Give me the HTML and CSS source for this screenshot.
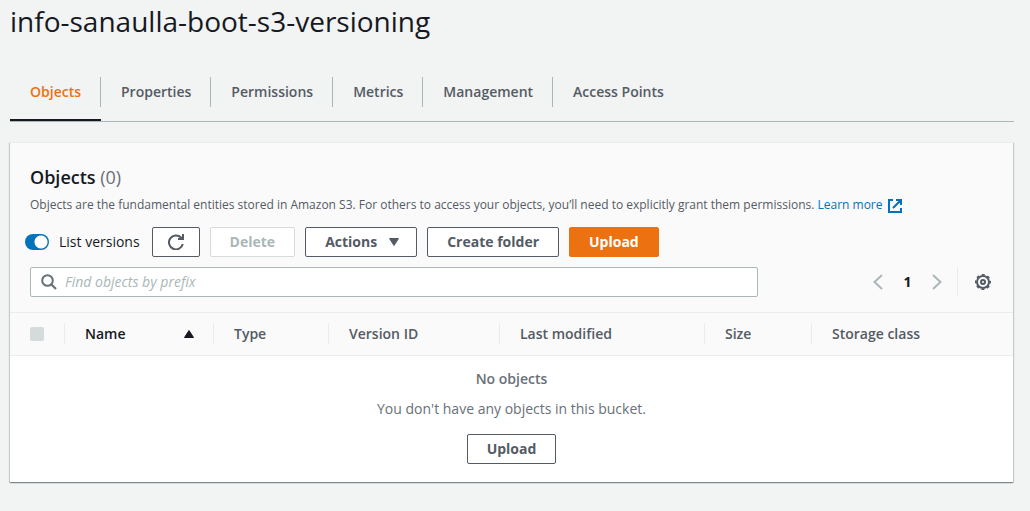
FILE: index.html
```html
<!DOCTYPE html>
<html lang="en">
<head>
<meta charset="utf-8">
<title>info-sanaulla-boot-s3-versioning</title>
<link rel="stylesheet" href="styles.css">
</head>
<body>
<main class="page">
  <h1 class="title">info-sanaulla-boot-s3-versioning</h1>

  <nav class="tabs">
    <a class="tab tab-active" href="#objects"><span>Objects</span></a>
    <a class="tab" href="#properties"><span>Properties</span></a>
    <a class="tab" href="#permissions"><span>Permissions</span></a>
    <a class="tab" href="#metrics"><span>Metrics</span></a>
    <a class="tab" href="#management"><span>Management</span></a>
    <a class="tab" href="#access-points"><span>Access Points</span></a>
  </nav>

  <section class="card">
    <header class="card-header">
      <h2 class="heading">Objects <span class="count">(0)</span></h2>
      <p class="description">Objects are the fundamental entities stored in Amazon S3. For others to access your objects, you’ll need to explicitly grant them permissions. <a class="link" href="#learn-more">Learn more
        <svg class="external" viewBox="0 0 14 14" width="14" height="14" aria-hidden="true"><path d="M5 1H1v12h12V9M8 1h5v5M13 1L5 9" fill="none" stroke="currentColor" stroke-width="2"/></svg></a></p>

      <div class="actions">
        <label class="toggle"><input class="switch" type="checkbox" role="switch" checked>List versions</label>
        <button class="button button-icon" type="button" aria-label="Refresh">
          <svg viewBox="0 0 16 16" width="16" height="16" aria-hidden="true"><path d="M14.800 10A7 7 0 1 1 13 3.500L14.500 5M10 5h5V0" fill="none" stroke="currentColor" stroke-width="2"/></svg>
        </button>
        <button class="button" type="button" disabled>Delete</button>
        <button class="button" type="button">Actions
          <svg class="caret" viewBox="0 0 10 8" width="10" height="8" aria-hidden="true"><path d="M.5.5h9L5 7.500z" fill="currentColor" stroke="currentColor" stroke-linejoin="round"/></svg>
        </button>
        <button class="button" type="button">Create folder</button>
        <button class="button button-primary" type="button">Upload</button>
      </div>

      <div class="filters">
        <div class="search">
          <svg viewBox="0 0 16 16" width="16" height="16" aria-hidden="true"><circle cx="6.500" cy="6.500" r="5.300" fill="none" stroke="currentColor" stroke-width="2"/><path d="M10.500 10.500L15 15" stroke="currentColor" stroke-width="2.200"/></svg>
          <input class="search-input" type="search" aria-label="Find objects by prefix" placeholder="Find objects by prefix">
        </div>
        <div class="pager">
          <button class="pager-button" type="button" aria-label="Previous page"><svg viewBox="0 0 10 16" width="10" height="16" aria-hidden="true"><path d="M9 1L1.500 8L9 15" fill="none" stroke="currentColor" stroke-width="2"/></svg></button>
          <span class="pager-current">1</span>
          <button class="pager-button" type="button" aria-label="Next page"><svg viewBox="0 0 10 16" width="10" height="16" aria-hidden="true"><path d="M1 1L8.500 8L1 15" fill="none" stroke="currentColor" stroke-width="2"/></svg></button>
        </div>
        <button class="settings" type="button" aria-label="Preferences">
          <svg viewBox="0 0 16 16" width="16" height="16" aria-hidden="true"><g fill="none" stroke="currentColor"><circle cx="8" cy="8" r="6" stroke-width="2"/><circle cx="8" cy="8" r="7.300" stroke-width="1.600" stroke-dasharray="2.870 2.863" stroke-dashoffset="1.435"/><circle cx="8" cy="8" r="2" stroke-width="2"/></g></svg>
        </button>
      </div>
    </header>

    <table class="table">
      <colgroup>
        <col class="col-select"><col class="col-name"><col class="col-type"><col class="col-version"><col class="col-modified"><col class="col-size"><col>
      </colgroup>
      <thead>
        <tr>
          <th class="select-cell"><input class="check" type="checkbox" aria-label="Select all objects" disabled></th>
          <th class="sorted"><div class="cell">Name
            <svg viewBox="0 0 10 8" width="10" height="8" aria-hidden="true"><path d="M.5 7.500h9L5 .5z" fill="currentColor" stroke="currentColor" stroke-linejoin="round"/></svg></div></th>
          <th><div class="cell">Type</div></th>
          <th><div class="cell">Version ID</div></th>
          <th><div class="cell">Last modified</div></th>
          <th><div class="cell">Size</div></th>
          <th><div class="cell">Storage class</div></th>
        </tr>
      </thead>
      <tbody>
        <tr>
          <td colspan="7">
            <div class="empty">
              <strong>No objects</strong>
              <p class="empty-text">You don't have any objects in this bucket.</p>
              <button class="button" type="button">Upload</button>
            </div>
          </td>
        </tr>
      </tbody>
    </table>
  </section>
</main>
</body>
</html>
```
FILE: styles.css
```css
* {
  box-sizing: border-box;
}

body {
  margin: 0;
  background: #f2f3f3;
  color: #16191f;
  font: 14px/20px "Open Sans", "Noto Sans", sans-serif;
}

button,
input {
  font: inherit;
}

svg {
  display: block;
  flex: none;
}

.page {
  padding: 3px 16px 28px 10px;
}

.title {
  margin: 0;
  font-size: 28px;
  font-weight: 400;
  line-height: 36px;
}

.tabs {
  display: flex;
  margin: 23px 0 20px;
  border-bottom: 1px solid #aab7b8;
}

.tab {
  padding: 15px 0 12px;
  border-bottom: 2px solid transparent;
  color: #545b64;
  font-weight: 600;
  text-decoration: none;
}

.tab span {
  display: block;
  padding: 5px 19px 5px 20px;
  border-right: 1px solid #aab7b8;
}

.tab:last-child span {
  border-right: 0;
}

.tab-active {
  border-bottom-color: #16191f;
  color: #ec7211;
}

.card {
  margin-right: 1px;
  border-top: 1px solid #eaeded;
  background: #fff;
  box-shadow: 0 1px 1px rgba(0, 28, 36, 0.3), 1px 1px 1px rgba(0, 28, 36, 0.15), -1px 1px 1px rgba(0, 28, 36, 0.15);
}

.card-header {
  padding: 22px 20px 15px;
  border-bottom: 1px solid #eaeded;
  background: #fafafa;
}

.heading {
  margin: 0;
  font-size: 18px;
  font-weight: 600;
  line-height: 24px;
}

.count {
  color: #687078;
  font-weight: 400;
}

.description {
  margin: 6px 0 12px;
  color: #545b64;
  font-size: 12px;
}

.link {
  color: #0073bb;
  text-decoration: none;
}

.external {
  display: inline-block;
  margin-left: 2px;
  vertical-align: -4px;
}

.actions {
  display: flex;
  align-items: center;
  gap: 10px;
  margin-left: -5px;
}

.toggle {
  display: flex;
  align-items: center;
  gap: 10px;
  margin-right: 2px;
}

.switch {
  width: 24px;
  height: 16px;
  margin: 0;
  border-radius: 8px;
  appearance: none;
  background: radial-gradient(circle at 16px 8px, #fff 6px, #0073bb 7px);
}

.button {
  display: flex;
  align-items: center;
  justify-content: center;
  gap: 12px;
  height: 30px;
  padding: 0 19px;
  border: 1px solid #545b64;
  border-radius: 2px;
  background: #fff;
  color: #545b64;
  font-weight: 700;
}

.button:disabled {
  border-color: #d5dbdb;
  color: #aab7b8;
}

.button-icon {
  width: 48px;
  padding: 0;
}

.button-primary {
  border-color: #ec7211;
  background: #ec7211;
  color: #fff;
}

.caret {
  margin-right: -2px;
}

.filters {
  display: flex;
  align-items: center;
  margin-top: 10px;
}

.search {
  display: flex;
  flex: 1;
  align-items: center;
  gap: 8px;
  height: 30px;
  margin-right: 106px;
  padding: 0 10px;
  border: 1px solid #aab7b8;
  border-radius: 2px;
  background: #fff;
  color: #687078;
}

.search-input {
  flex: 1;
  min-width: 0;
  padding: 0;
  border: 0;
  outline: 0;
  background: transparent;
}

.search-input::placeholder {
  color: #aab7b8;
  font-style: italic;
}

.pager {
  display: flex;
  align-items: center;
  padding-right: 6px;
}

.pager-button,
.settings {
  display: flex;
  align-items: center;
  justify-content: center;
  height: 30px;
  padding: 0;
  border: 0;
  background: transparent;
  color: #aab7b8;
}

.pager-button {
  width: 28px;
}

.pager-current {
  width: 31px;
  font-weight: 700;
  text-align: center;
}

.settings {
  padding: 0 2px 0 17px;
  border-left: 1px solid #eaeded;
  color: #545b64;
}

.table {
  width: 100%;
  border-collapse: collapse;
  table-layout: fixed;
}

.col-select { width: 54px; }
.col-name { width: 149px; }
.col-type { width: 115px; }
.col-version { width: 171px; }
.col-modified { width: 205px; }
.col-size { width: 107px; }

th {
  padding: 10px 0 11px;
  border-bottom: 1px solid #eaeded;
  background: #fafafa;
  color: #545b64;
  font-weight: 600;
  text-align: left;
}

td {
  padding: 0;
}

.select-cell {
  padding-left: 20px;
}

.check {
  display: block;
  width: 14px;
  height: 14px;
  margin: 0;
  border-radius: 2px;
  appearance: none;
  background: #d5dbdb;
}

.cell {
  display: flex;
  align-items: center;
  justify-content: space-between;
  height: 21px;
  padding: 0 19px 0 20px;
  border-left: 1px solid #eaeded;
}

.sorted {
  color: #16191f;
}

.empty {
  display: flex;
  flex-direction: column;
  align-items: center;
  gap: 10px;
  padding: 13px 20px 18px;
  color: #687078;
}

.empty strong {
  font-weight: 600;
}

.empty-text {
  margin: 0 0 5px;
}
```
